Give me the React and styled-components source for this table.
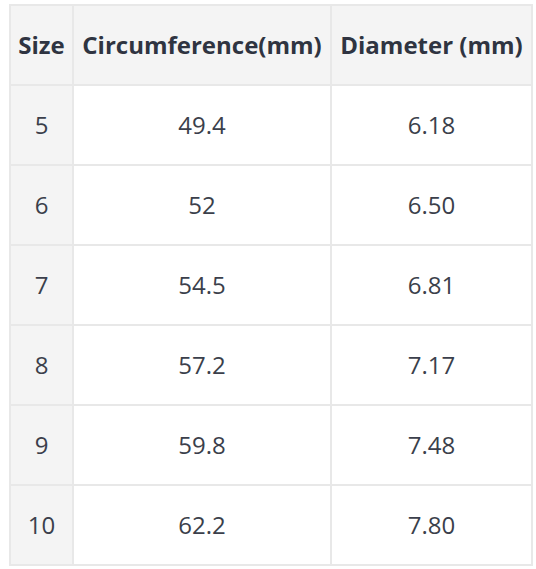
import React from "react";
import styled, { createGlobalStyle } from "styled-components";

const Global = createGlobalStyle`
  html, body { margin: 0; padding: 0; background: #ffffff; }
  body { font-family: "Open Sans", "Noto Sans", sans-serif; }
`;

const Page = styled.div`
  padding: 4px 0 0 9px;
`;

const Table = styled.div`
  display: grid;
  grid-template-columns: 61px 256px 199px;
  grid-auto-rows: 78px;
  gap: 2px;
  padding: 2px;
  width: max-content;
  background: #e8e8e8;
`;

const Cell = styled.div`
  display: flex;
  align-items: center;
  justify-content: center;
  padding-bottom: 2px;
  box-sizing: border-box;
  background: ${(p) => (p.$shaded ? "#f4f4f4" : "#ffffff")};
  color: ${(p) => (p.$head ? "#2f3441" : "#3b3f4b")};
  font-size: 24px;
  font-weight: ${(p) => (p.$head ? 700 : 400)};
  white-space: nowrap;
`;

const headers = ["Size", "Circumference(mm)", "Diameter (mm)"];
const rows = [
  ["5", "49.4", "6.18"],
  ["6", "52", "6.50"],
  ["7", "54.5", "6.81"],
  ["8", "57.2", "7.17"],
  ["9", "59.8", "7.48"],
  ["10", "62.2", "7.80"],
];

export default function App() {
  return (
    <Page>
      <Global />
      <Table>
        {headers.map((h) => (
          <Cell key={h} $head $shaded>
            {h}
          </Cell>
        ))}
        {rows.map((r) =>
          r.map((v, i) => (
            <Cell key={r[0] + "-" + i} $shaded={i === 0}>
              {v}
            </Cell>
          ))
        )}
      </Table>
    </Page>
  );
}
